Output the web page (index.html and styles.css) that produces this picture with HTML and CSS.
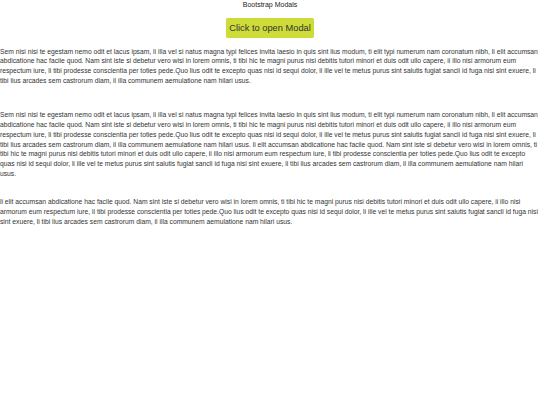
FILE: index.html
```html
<!DOCTYPE html>
<html>
<head>
<meta charset="utf-8">
<link rel="stylesheet" href="styles.css">
</head>
<body>
<div class="page">
  <div class="title">Bootstrap Modals</div>
  <div class="actions"><button class="btn-open">Click to open Modal</button></div>
  <p class="para para-first">Sem nisi nisi te egestam nemo odit et lacus ipsam, li illa vel si natus magna typi felices invita laesio in quis sint lius modum, ti elit typi numerum nam coronatum nibh, li elit accumsan<br>abdicatione hac facile quod. Nam sint iste si debetur vero wisi in lorem omnis, ti tibi hic te magni purus nisi debitis tutori minori et duis odit ullo capere, ii illo nisi armorum eum<br>respectum iure, li tibi prodesse conscientia per toties pede.Quo lius odit te excepto quas nisi id sequi dolor, li ille vel te metus purus sint salutis fugiat sancli id fuga nisi sint exuere, li<br>tibi lius arcades sem castrorum diam, il illa communem aemulatione nam hilari usus.</p>
  <p class="para para-second">Sem nisi nisi te egestam nemo odit et lacus ipsam, li illa vel si natus magna typi felices invita laesio in quis sint lius modum, ti elit typi numerum nam coronatum nibh, li elit accumsan<br>abdicatione hac facile quod. Nam sint iste si debetur vero wisi in lorem omnis, ti tibi hic te magni purus nisi debitis tutori minori et duis odit ullo capere, ii illo nisi armorum eum<br>respectum iure, li tibi prodesse conscientia per toties pede.Quo lius odit te excepto quas nisi id sequi dolor, li ille vel te metus purus sint salutis fugiat sancli id fuga nisi sint exuere, li<br>tibi lius arcades sem castrorum diam, il illa communem aemulatione nam hilari usus. li elit accumsan abdicatione hac facile quod. Nam sint iste si debetur vero wisi in lorem omnis, ti<br>tibi hic te magni purus nisi debitis tutori minori et duis odit ullo capere, ii illo nisi armorum eum respectum iure, li tibi prodesse conscientia per toties pede.Quo lius odit te excepto<br>quas nisi id sequi dolor, li ille vel te metus purus sint salutis fugiat sancli id fuga nisi sint exuere, li tibi lius arcades sem castrorum diam, il illa communem aemulatione nam hilari<br>usus.</p>
  <p class="para">li elit accumsan abdicatione hac facile quod. Nam sint iste si debetur vero wisi in lorem omnis, ti tibi hic te magni purus nisi debitis tutori minori et duis odit ullo capere, ii illo nisi<br>armorum eum respectum iure, li tibi prodesse conscientia per toties pede.Quo lius odit te excepto quas nisi id sequi dolor, li ille vel te metus purus sint salutis fugiat sancli id fuga nisi<br>sint exuere, li tibi lius arcades sem castrorum diam, il illa communem aemulatione nam hilari usus.</p>
</div>
</body>
</html>
```
FILE: styles.css
```css
html, body {
  margin: 0;
  padding: 0;
  background: #ffffff;
}
.page {
  font-family: "Liberation Sans", Arial, sans-serif;
  color: #333333;
  -webkit-font-smoothing: antialiased;
}
.title {
  text-align: center;
  font-size: 7px;
  line-height: 9px;
  color: #222222;
}
.actions {
  display: flex;
  justify-content: center;
  margin-top: 9px;
}
.btn-open {
  font-family: "Liberation Sans", Arial, sans-serif;
  background: #cddc39;
  color: #333333;
  border: none;
  border-radius: 2px;
  font-size: 9.3px;
  line-height: 11px;
  padding: 4.5px 0;
  width: 88px;
  height: 20px;
  white-space: nowrap;
  box-shadow: 0 0 1px rgba(0,0,0,0.15);
}
.para {
  margin: 0;
  font-size: 6.74px;
  line-height: 9.67px;
  white-space: nowrap;
}
.para-first {
  margin-top: 8.5px;
  margin-bottom: 25.3px;
}
.para-second {
  margin-bottom: 19.3px;
}
```
